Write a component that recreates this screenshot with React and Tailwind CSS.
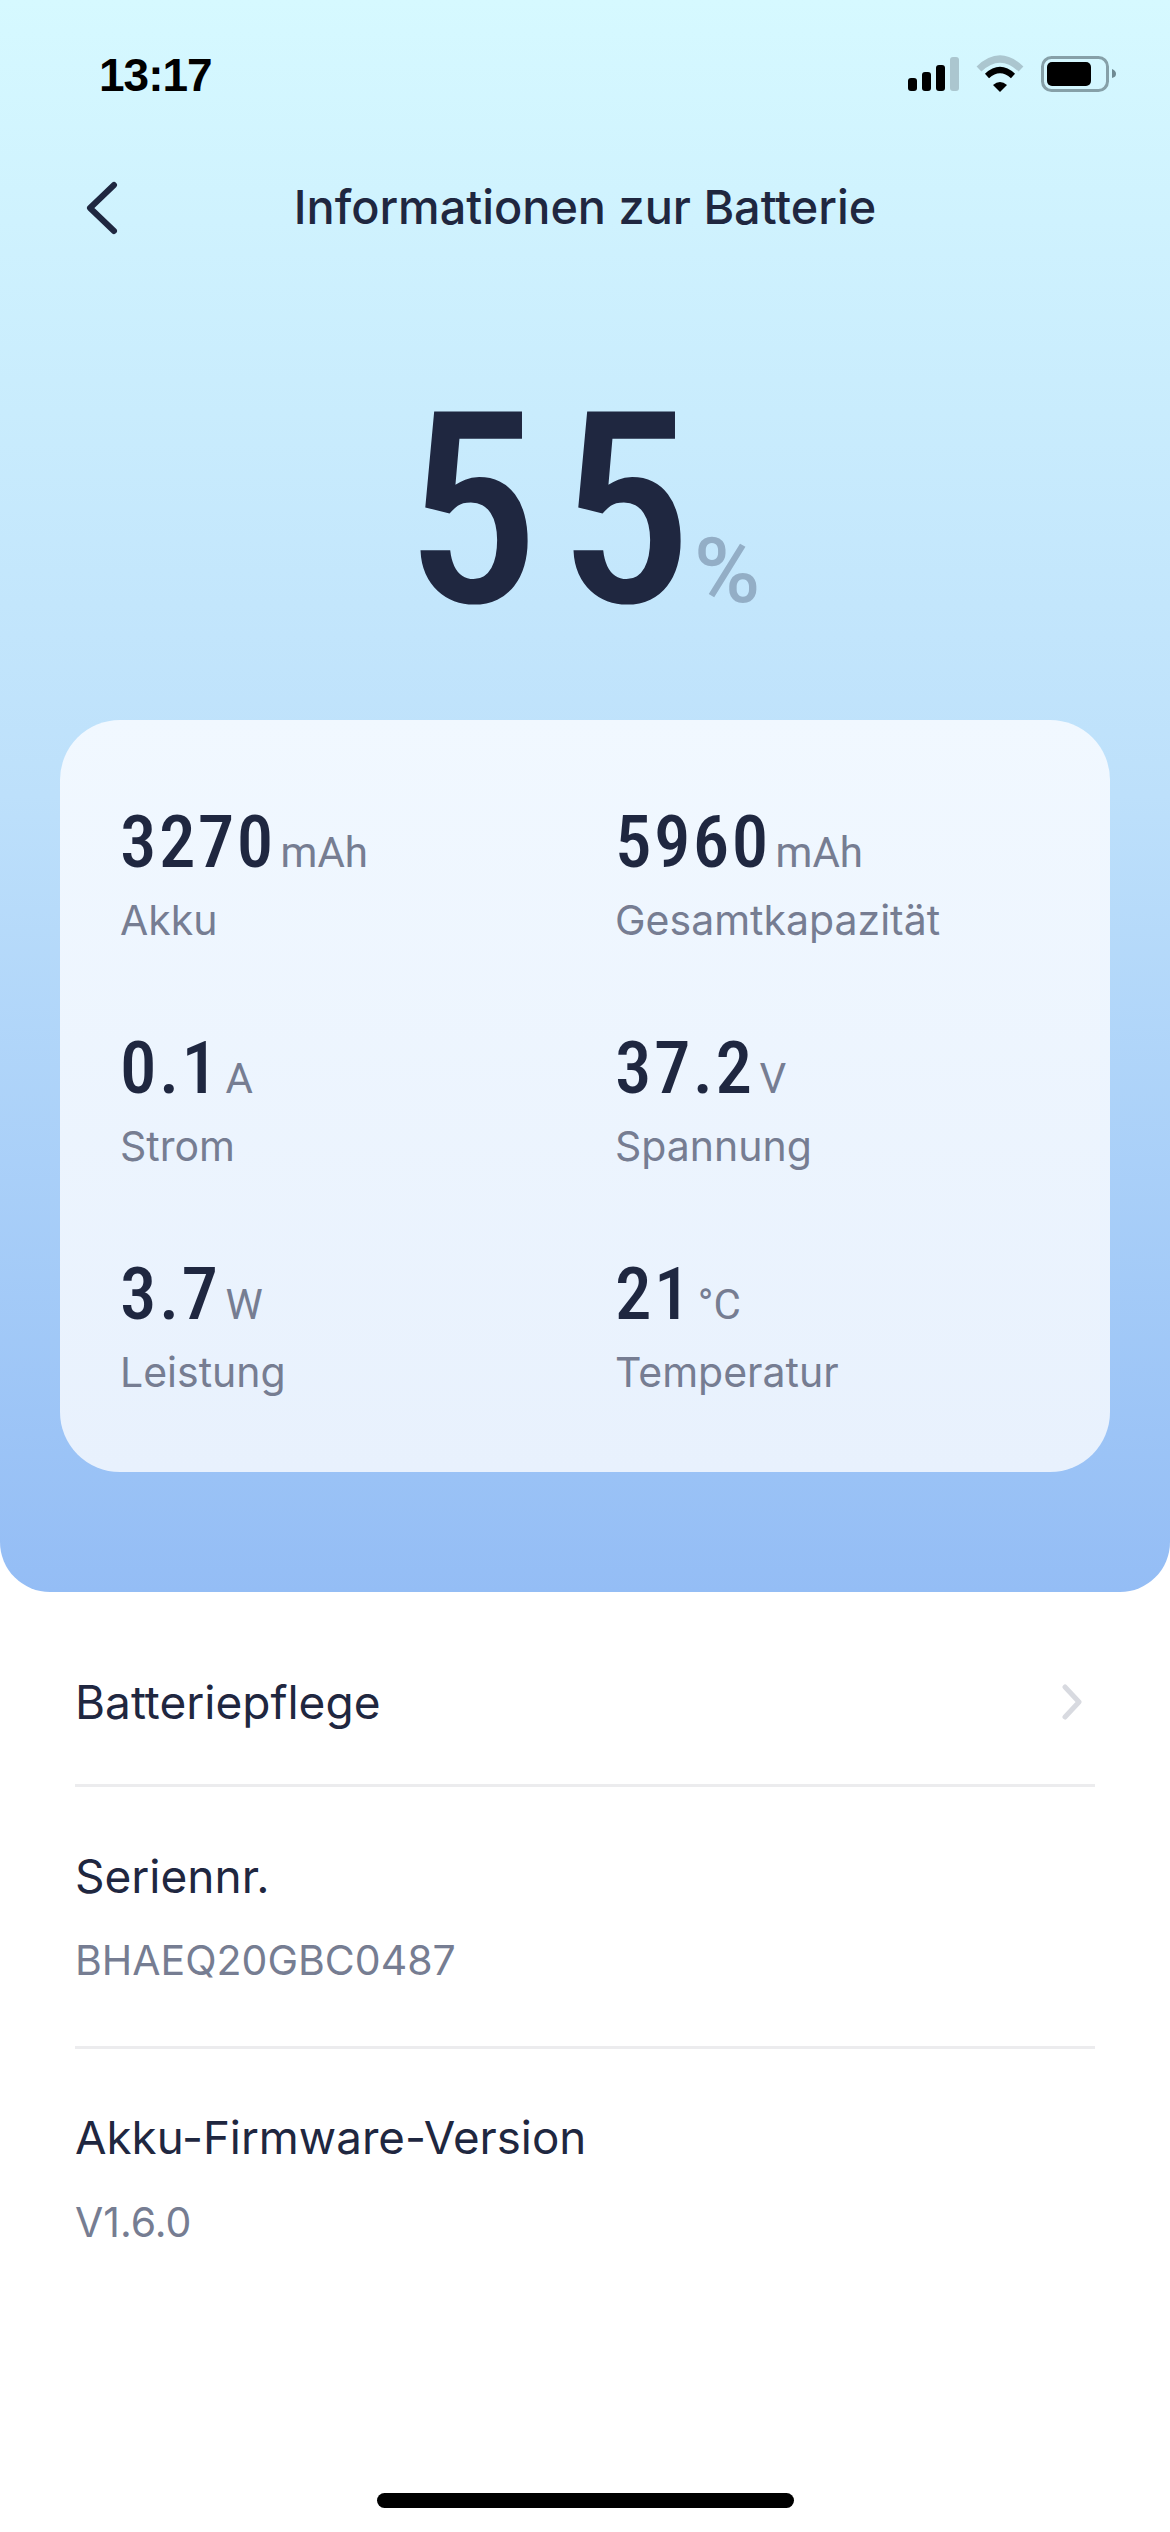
import React from 'react';

const stats = [
  { value: '3270', unit: 'mAh', label: 'Akku' },
  { value: '5960', unit: 'mAh', label: 'Gesamtkapazität' },
  { value: '0.1', unit: 'A', label: 'Strom' },
  { value: '37.2', unit: 'V', label: 'Spannung' },
  { value: '3.7', unit: 'W', label: 'Leistung' },
  { value: '21', unit: '°C', label: 'Temperatur' },
];

function StatusIcons() {
  return (
    <svg width="208" height="37" viewBox="0 0 208 37">
      <rect x="0" y="23" width="9" height="13" rx="3" fill="#000" />
      <rect x="14" y="17" width="9" height="19" rx="3" fill="#000" />
      <rect x="28" y="10" width="9" height="26" rx="3" fill="#000" />
      <rect x="42" y="2" width="9" height="34" rx="3" fill="#abc6cf" />
      <path d="M71 14 Q92 -6 113 14" fill="none" stroke="#abc6cf" strokeWidth="7" />
      <path d="M79 21 Q92 9 105 21" fill="none" stroke="#000" strokeWidth="6" />
      <path d="M85 30 Q92 24 99 30 L92 37 Z" fill="#000" />
      <rect x="134.5" y="2.5" width="65" height="33" rx="9" fill="none" stroke="#86a0a8" strokeWidth="3" />
      <rect x="139" y="7" width="44" height="24" rx="5" fill="#000" />
      <path d="M204 14 C207 15 208 17 208 19 C208 21 207 22 204 23 Z" fill="#6f8a93" />
    </svg>
  );
}

export default function App() {
  return (
    <div className="w-[1170px] h-[2532px] bg-white font-['Inter',sans-serif] overflow-hidden relative">
      {/* Blue header */}
      <div className="h-[1592px] rounded-b-[50px] bg-gradient-to-b from-[#d6f9ff] via-[#bde0fb] to-[#94bdf5] px-[60px]">
        <div className="h-[150px] flex items-start justify-between pt-[52px] pl-[39px] -mr-[6px]">
          <span className="font-['Liberation_Sans',sans-serif] font-bold text-[46px] leading-[46px] text-black tracking-[-1px]">13:17</span>
          <div className="pt-[3px]"><StatusIcons /></div>
        </div>
        <div className="relative h-[115px] flex items-center justify-center pb-[2px]">
          <svg className="absolute left-[24px] top-[31px]" width="34" height="54" viewBox="0 0 34 54" fill="none">
            <path d="M30 4 L6 27 L30 50" stroke="#1f2740" strokeWidth="6" strokeLinecap="round" strokeLinejoin="round" />
          </svg>
          <h1 className="text-[46.8px] font-[450] leading-[56px] text-[#1f2740]">Informationen zur Batterie</h1>
        </div>
        <div className="h-[455px] flex items-end pl-[345px] pb-[76px]">
          <span className="font-['Roboto',sans-serif] font-stretch-[85%] font-medium text-[268px] leading-[268px] text-[#1f2740]"><span className="tracking-[19px]">5</span>5</span>
          <span className="font-['Roboto',sans-serif] font-medium text-[90px] leading-[84px] text-[#93aec6] ml-[2px] mb-[30px]">%</span>
        </div>
        <div className="h-[752px] rounded-[60px] bg-gradient-to-b from-[#f1f8ff] to-[#e8f1fd] pt-[82px] pl-[60px] grid grid-cols-2 content-start gap-y-[66px]">
          {stats.map((s) => (
            <div key={s.label} className="h-[160px]">
              <div className="flex items-baseline">
                <span className="font-['Roboto',sans-serif] font-stretch-[85%] font-medium text-[73px] leading-[80px] tracking-[2.4px] text-[#1f2740]">{s.value}</span>
                <span className="font-['Roboto',sans-serif] text-[42px] leading-[80px] text-[#767d92] ml-[5px]">{s.unit}</span>
              </div>
              <div className="text-[41px] leading-[56px] -mt-[1px] text-[#767d92]">{s.label}</div>
            </div>
          ))}
        </div>
      </div>

      {/* List */}
      <div className="px-[75px]">
        <div className="h-[195px] pt-[28px] flex items-center justify-between border-b-[3px] border-[#ececee]">
          <span className="text-[46px] text-[#1f2740]">Batteriepflege</span>
          <svg className="mr-[13px]" width="20" height="36" viewBox="0 0 20 36" fill="none">
            <path d="M3 3 L17 18 L3 33" stroke="#d8dae0" strokeWidth="5" strokeLinecap="round" strokeLinejoin="round" />
          </svg>
        </div>
        <div className="h-[262px] pt-[61px] border-b-[3px] border-[#ececee]">
          <div className="text-[46px] leading-[56px] text-[#1f2740]">Seriennr.</div>
          <div className="text-[41px] leading-[56px] mt-[28px] text-[#767d92]">BHAEQ20GBC0487</div>
        </div>
        <div className="pt-[61px]">
          <div className="text-[45.7px] leading-[56px] text-[#1f2740]">Akku-Firmware-Version</div>
          <div className="text-[41px] leading-[56px] mt-[28px] text-[#767d92]">V1.6.0</div>
        </div>
      </div>

      <div className="absolute left-[377px] bottom-[24px] w-[417px] h-[15px] rounded-full bg-black" />
    </div>
  );
}
